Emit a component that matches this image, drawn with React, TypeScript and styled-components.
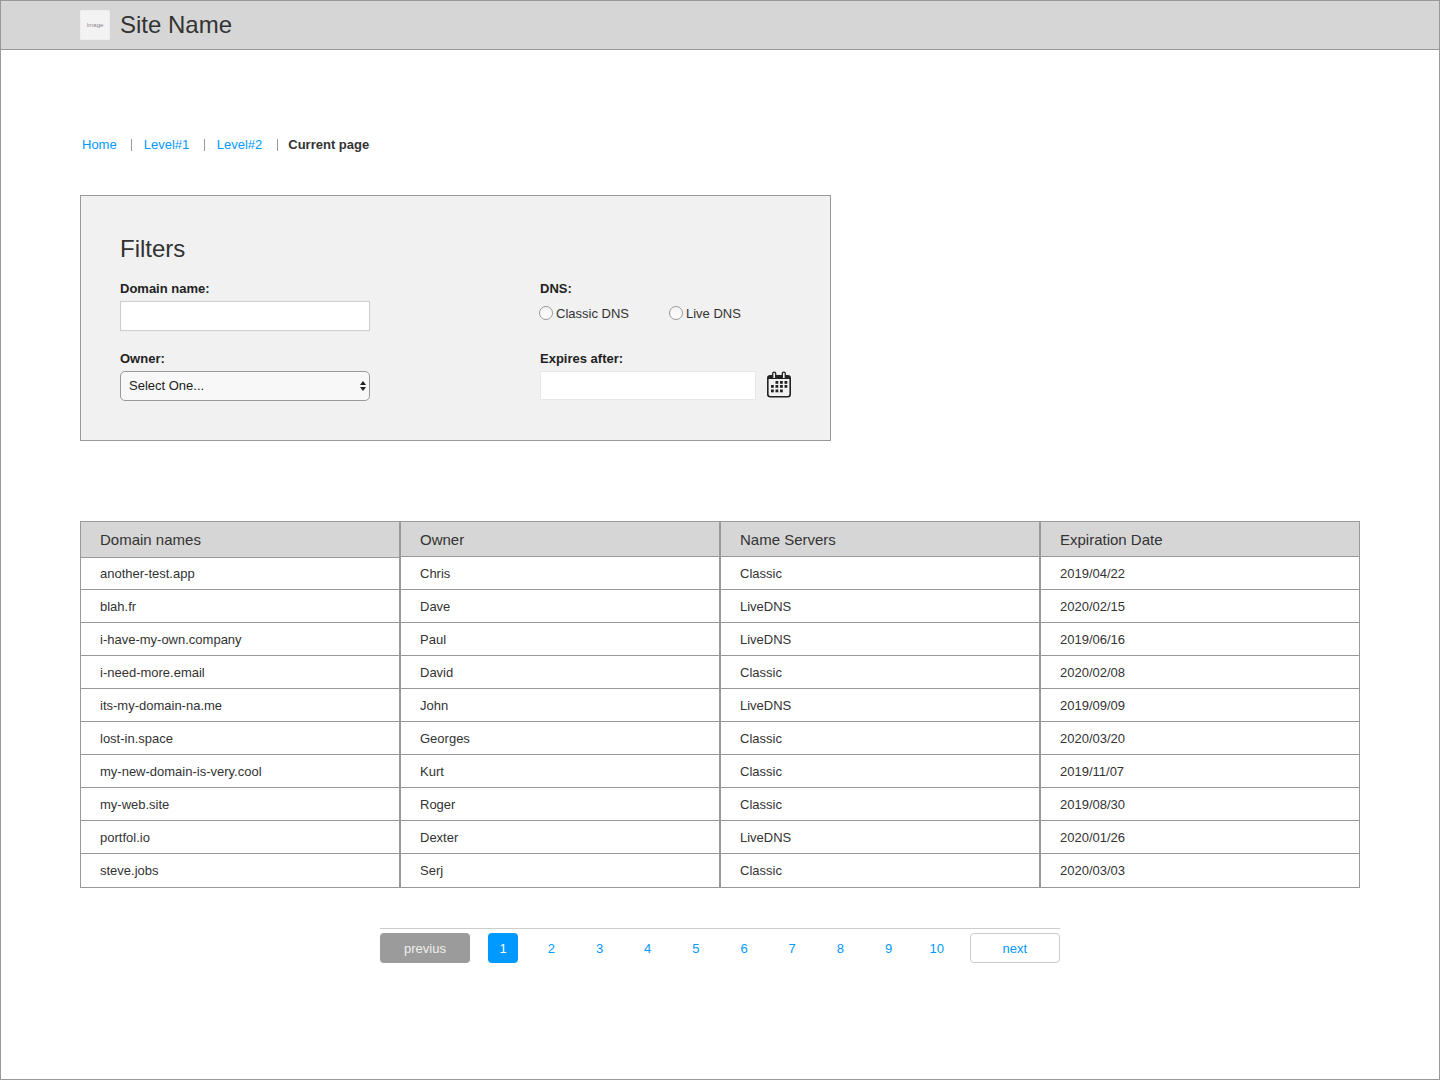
import React from "react";
import styled, { createGlobalStyle } from "styled-components";

const Global = createGlobalStyle`
  html, body { margin: 0; padding: 0; background: #fff; }
  * { box-sizing: border-box; }
  body { font-family: "Liberation Sans", Arial, sans-serif; color: #333; }
`;

const Page = styled.div`
  width: 1440px;
  height: 1080px;
  border: 1px solid #999;
  display: flex;
  flex-direction: column;
`;

const Header = styled.header`
  height: 49px;
  background: #d6d6d6;
  border-bottom: 1px solid #999;
  padding: 9px 0 0 79px;
  display: flex;
  align-items: flex-start;
  gap: 10px;
  flex-shrink: 0;
`;

const Logo = styled.div`
  width: 30px;
  height: 30px;
  background: #f3f3f3;
  border: 1px solid #eee;
  border-radius: 1px;
  font-size: 6px;
  color: #888;
  display: flex;
  align-items: center;
  justify-content: center;
`;

const SiteName = styled.div`
  font-size: 24px;
  line-height: 30px;
  color: #333;
`;

const Main = styled.main`
  padding: 87px 79px 0;
  display: flex;
  flex-direction: column;
`;

const Breadcrumb = styled.nav`
  display: flex;
  align-items: center;
  height: 16px;
  font-size: 13px;
  padding-left: 2px;
`;

const Crumb = styled.a`
  color: #0099ff;
  text-decoration: none;
  line-height: 16px;
`;

const Current = styled.span`
  color: #333;
  font-weight: 700;
  line-height: 16px;
`;

const Separator = styled.span<{ $after: number; $before: number }>`
  width: 1px;
  height: 12px;
  background: #999;
  margin-left: ${(p) => p.$before}px;
  margin-right: ${(p) => p.$after}px;
`;

const FilterPanel = styled.section`
  margin-top: 42px;
  width: 751px;
  height: 246px;
  background: #f1f1f1;
  border: 1px solid #999;
  padding: 39px 39px 0;
`;

const FilterTitle = styled.h2`
  margin: 0;
  font-size: 24px;
  font-weight: 400;
  line-height: 28px;
  color: #333;
`;

const FilterGrid = styled.div`
  margin-top: 18px;
  display: grid;
  grid-template-columns: 420px 1fr;
  grid-auto-rows: 70px;
`;

const Field = styled.div`
  display: flex;
  flex-direction: column;
`;

const Label = styled.label`
  display: block;
  font-size: 13px;
  font-weight: 700;
  line-height: 16px;
  margin-bottom: 4px;
  color: #222;
`;

const TextInput = styled.input`
  display: block;
  width: 250px;
  height: 30px;
  background: #fff;
  border: 1px solid #ccc;
  padding: 0 8px;
  outline: none;
`;

const SelectWrap = styled.div`
  position: relative;
  width: 250px;
  height: 30px;
`;

const Select = styled.select`
  appearance: none;
  display: block;
  width: 100%;
  height: 100%;
  background: #f8f8f8;
  border: 1px solid #999;
  border-radius: 5px;
  padding: 0 8px 2px;
  font-family: "Liberation Sans", Arial, sans-serif;
  font-size: 13px;
  color: #222;
  outline: none;
`;

const SelectArrows = styled.svg`
  position: absolute;
  right: 3px;
  top: 9px;
  width: 8px;
  height: 12px;
`;

const RadioRow = styled.div`
  display: flex;
  height: 20px;
  margin: 2px 0 0 -1px;
  gap: 40px;
  align-items: center;
`;

const RadioLabel = styled.label`
  display: flex;
  align-items: center;
  gap: 3px;
  font-size: 13px;
  color: #333;
`;

const Radio = styled.input`
  appearance: none;
  width: 14px;
  height: 14px;
  margin: 0;
  border-radius: 50%;
  border: 1px solid #999;
  background: linear-gradient(#f4f4f4, #fff);
`;

const DateRow = styled.div`
  display: flex;
  align-items: flex-start;
  gap: 11px;
`;

const DateInput = styled.input`
  display: block;
  width: 216px;
  height: 29px;
  background: #fff;
  border: 1px solid #e8e8e8;
  outline: none;
`;

const CalendarIcon = styled.svg`
  width: 24px;
  height: 28px;
  display: block;
`;

const Table = styled.div`
  margin-top: 80px;
  width: 1280px;
  display: grid;
  grid-template-columns: repeat(4, 320px);
`;

const Column = styled.div`
  border: 1px solid #999;
  display: flex;
  flex-direction: column;
  height: 367px;
`;

const HeadCell = styled.div<{ $tall?: boolean }>`
  height: ${(p) => (p.$tall ? 36 : 35)}px;
  background: #d6d6d6;
  border-bottom: 1px solid #999;
  padding: 0 19px;
  font-size: 15px;
  line-height: 35px;
  color: #333;
`;

const Cell = styled.div<{ $last?: boolean }>`
  height: 33px;
  border-bottom: ${(p) => (p.$last ? "none" : "1px solid #999")};
  padding: 0 19px;
  font-size: 13px;
  line-height: 33px;
  color: #333;
`;

const FirstCell = styled(Cell)<{ $short?: boolean }>`
  height: ${(p) => (p.$short ? 32 : 33)}px;
  line-height: ${(p) => (p.$short ? 31 : 33)}px;
`;

const Pagination = styled.div`
  margin: 40px 0 0 300px;
  width: 680px;
  border-top: 1px solid #ccc;
  padding-top: 4px;
  display: flex;
  justify-content: space-between;
  align-items: center;
`;

const PageButton = styled.a`
  height: 30px;
  width: 90px;
  border-radius: 4px;
  font-size: 13px;
  line-height: 32px;
  text-align: center;
  text-decoration: none;
`;

const PrevButton = styled(PageButton)`
  background: #9b9b9b;
  color: #eee;
`;

const NextButton = styled(PageButton)`
  background: #fff;
  border: 1px solid #ccc;
  color: #0099ff;
  line-height: 30px;
`;

const PageNumber = styled.a<{ $active?: boolean }>`
  width: 30px;
  height: 30px;
  border-radius: 4px;
  font-size: 13px;
  line-height: 32px;
  text-align: center;
  text-decoration: none;
  background: ${(p) => (p.$active ? "#0099ff" : "transparent")};
  color: ${(p) => (p.$active ? "#fff" : "#0099ff")};
`;

const columns: { title: string; values: string[] }[] = [
  {
    title: "Domain names",
    values: [
      "another-test.app",
      "blah.fr",
      "i-have-my-own.company",
      "i-need-more.email",
      "its-my-domain-na.me",
      "lost-in.space",
      "my-new-domain-is-very.cool",
      "my-web.site",
      "portfol.io",
      "steve.jobs",
    ],
  },
  {
    title: "Owner",
    values: ["Chris", "Dave", "Paul", "David", "John", "Georges", "Kurt", "Roger", "Dexter", "Serj"],
  },
  {
    title: "Name Servers",
    values: ["Classic", "LiveDNS", "LiveDNS", "Classic", "LiveDNS", "Classic", "Classic", "Classic", "LiveDNS", "Classic"],
  },
  {
    title: "Expiration Date",
    values: [
      "2019/04/22",
      "2020/02/15",
      "2019/06/16",
      "2020/02/08",
      "2019/09/09",
      "2020/03/20",
      "2019/11/07",
      "2019/08/30",
      "2020/01/26",
      "2020/03/03",
    ],
  },
];

function Calendar() {
  const dots: [number, number][] = [
    [8.5, 10],
    [13, 10],
    [17.5, 10],
    [4, 14],
    [8.5, 14],
    [13, 14],
    [17.5, 14],
    [4, 18.5],
    [8.5, 18.5],
    [13, 18.5],
  ];
  return (
    <CalendarIcon viewBox="0 0 24 28">
      <rect x="0.8" y="4.8" width="22.4" height="21" rx="2.5" fill="none" stroke="#222" strokeWidth="1.6" />
      <rect x="1" y="5" width="22" height="3" fill="#222" />
      <path
        d="M5.7 7V2.6a1.5 1.5 0 0 1 3 0V7M15.3 7V2.6a1.5 1.5 0 0 1 3 0V7"
        fill="#f1f1f1"
        stroke="#222"
        strokeWidth="1.3"
      />
      {dots.map(([x, y]) => (
        <rect key={`${x}-${y}`} x={x} y={y} width="2.8" height="2.8" fill="#222" />
      ))}
    </CalendarIcon>
  );
}

export default function App() {
  return (
    <>
      <Global />
      <Page>
        <Header>
          <Logo>Image</Logo>
          <SiteName>Site Name</SiteName>
        </Header>
        <Main>
          <Breadcrumb>
            <Crumb href="#">Home</Crumb>
            <Separator $before={14} $after={12} />
            <Crumb href="#">Level#1</Crumb>
            <Separator $before={14.5} $after={12} />
            <Crumb href="#">Level#2</Crumb>
            <Separator $before={15} $after={10} />
            <Current>Current page</Current>
          </Breadcrumb>
          <FilterPanel>
            <FilterTitle>Filters</FilterTitle>
            <FilterGrid>
              <Field>
                <Label>Domain name:</Label>
                <TextInput />
              </Field>
              <Field>
                <Label>DNS:</Label>
                <RadioRow>
                  <RadioLabel>
                    <Radio type="radio" name="dns" />
                    Classic DNS
                  </RadioLabel>
                  <RadioLabel>
                    <Radio type="radio" name="dns" />
                    Live DNS
                  </RadioLabel>
                </RadioRow>
              </Field>
              <Field>
                <Label>Owner:</Label>
                <SelectWrap>
                  <Select defaultValue="">
                    <option value="">Select One...</option>
                  </Select>
                  <SelectArrows viewBox="0 0 8 12">
                    <path d="M4 1 7 5H1zM4 11 1 7h6z" fill="#222" />
                  </SelectArrows>
                </SelectWrap>
              </Field>
              <Field>
                <Label>Expires after:</Label>
                <DateRow>
                  <DateInput />
                  <Calendar />
                </DateRow>
              </Field>
            </FilterGrid>
          </FilterPanel>
          <Table>
            {columns.map((c, ci) => (
              <Column key={c.title}>
                <HeadCell $tall={ci === 0}>{c.title}</HeadCell>
                {c.values.map((v, i) =>
                  i === 0 ? (
                    <FirstCell key={i} $short={ci === 0}>
                      {v}
                    </FirstCell>
                  ) : (
                    <Cell key={i} $last={i === c.values.length - 1}>
                      {v}
                    </Cell>
                  )
                )}
              </Column>
            ))}
          </Table>
          <Pagination>
            <PrevButton href="#">previus</PrevButton>
            {[1, 2, 3, 4, 5, 6, 7, 8, 9, 10].map((n) => (
              <PageNumber href="#" key={n} $active={n === 1}>
                {n}
              </PageNumber>
            ))}
            <NextButton href="#">next</NextButton>
          </Pagination>
        </Main>
      </Page>
    </>
  );
}
